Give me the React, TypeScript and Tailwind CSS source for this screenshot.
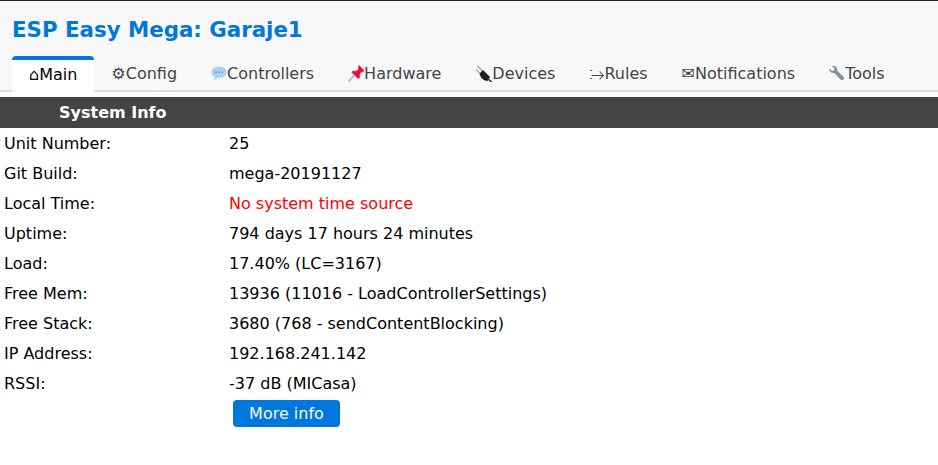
const TABS = [
  { label: "Config", glyph: "⚙" },
  { label: "Controllers", icon: "chat" },
  { label: "Hardware", icon: "pin" },
  { label: "Devices", icon: "plug" },
  { label: "Rules", glyph: "⧴" },
  { label: "Notifications", glyph: "✉" },
  { label: "Tools", icon: "wrench" },
];

const ROWS = [
  ["Unit Number:", "25"],
  ["Git Build:", "mega-20191127"],
  ["Local Time:", "No system time source"],
  ["Uptime:", "794 days 17 hours 24 minutes"],
  ["Load:", "17.40% (LC=3167)"],
  ["Free Mem:", "13936 (11016 - LoadControllerSettings)"],
  ["Free Stack:", "3680 (768 - sendContentBlocking)"],
  ["IP Address:", "192.168.241.142"],
  ["RSSI:", "-37 dB (MICasa)"],
];

function TabIcon({ name }: { name?: string }) {
  if (name === "chat") {
    return (
      <svg width="16" height="17" viewBox="0 0 16 17" className="shrink-0">
        <path d="M8 1.500C3.800 1.500.3 4 .3 7.200c0 2 1.400 3.700 3.500 4.700-.2 1.200-.8 2.200-1.700 3 1.900-.2 3.400-1 4.500-2.200.5.100 .9.100 1.400.1 4.300 0 7.700-2.500 7.700-5.600S12.300 1.500 8 1.500z" fill="#a9d3ee" />
        <circle cx="5" cy="7.200" r=".8" fill="#5b7f99" />
        <circle cx="8" cy="7.200" r=".8" fill="#5b7f99" />
        <circle cx="11" cy="7.200" r=".8" fill="#5b7f99" />
      </svg>
    );
  }
  if (name === "pin") {
    return (
      <svg width="16" height="17" viewBox="0 0 16 17" className="shrink-0">
        <path d="M.5 16.500l6-6.500" stroke="#a3acb3" strokeWidth="1.300" />
        <path d="M11 .5l5 5-1.500 1.500-1.500-.2-1.800 3.200.4 2.500-1.500 1-6-6 1-1.500 2.500.4 3.200-1.800-.2-1.500z" fill="#e0143c" stroke="#e0143c" strokeWidth=".8" strokeLinejoin="round" />
      </svg>
    );
  }
  if (name === "plug") {
    return (
      <svg width="17" height="17" viewBox="0 0 17 17" className="shrink-0">
        <path d="M2.500 1l5 5M1 4.500L5 8.500" stroke="#a3a8ad" strokeWidth="1.200" />
        <path d="M8 5l7 7-2.500 4c-3.500 0-7.500-3.500-8-7.500z" fill="#1c2024" />
        <path d="M13 14l3.500 3" stroke="#2c3e50" strokeWidth="1.600" />
      </svg>
    );
  }
  return (
    <svg width="17" height="17" viewBox="0 0 17 17" className="shrink-0">
      <path d="M1.500 3.500L4 6l2-.5.5-2L4 1c2-.8 4.200.2 5 2 .3.800.3 1.600.1 2.400l6.400 6.400c.8.800.8 2 0 2.800s-2 .8-2.800 0L6.300 7.900c-2.500.6-4.800-1-5.100-3.200-.1-.4 0-.8.300-1.200z" fill="#7d939f" />
    </svg>
  );
}

export default function App() {
  return (
    <div className="min-h-[465px] bg-white font-['DejaVu_Sans',sans-serif] text-base text-black">
      {/* header + tab strip */}
      <div className="border-t border-[#222] border-b-2 border-b-[#ddd] bg-[#f8f8f8]">
        <h1 className="pl-3 pt-[14px] text-[21.33px] font-bold leading-[30px] text-[#0077dd]">
          ESP Easy Mega: Garaje1
        </h1>
        <nav className="mt-[11px] flex pl-3">
          <a className="-mb-0.5 flex h-[36px] items-center rounded-t border-t-[4px] border-[#0077dd] bg-white px-[17px] pb-[3px] text-black">
            <span>⌂</span>
            <span>Main</span>
          </a>
          {TABS.map((tab) => (
            <a key={tab.label} className="mt-[1px] flex h-[33px] items-center px-[17px] text-[#444] last:-ml-[1px]">
              {tab.glyph ? <span>{tab.glyph}</span> : <TabIcon name={tab.icon} />}
              <span>{tab.label}</span>
            </a>
          ))}
        </nav>
      </div>

      <div className="mt-[5px] flex h-[31px] items-center bg-[#444] pl-[59px] font-bold text-white">
        System Info
      </div>

      <div className="flex flex-col pt-[1px]">
        {ROWS.map(([label, value]) => (
          <div key={label} className="flex h-[30px] items-center pl-1">
            <div className="w-[225px] shrink-0">{label}</div>
            <div className={label === "Local Time:" ? "text-[#ff0000]" : ""}>{value}</div>
          </div>
        ))}
      </div>

      <button className="ml-[233px] mt-[1px] flex h-[27px] w-[107px] items-center justify-center rounded-[4px] bg-[#0077dd] text-[#f4f8ff]">
        More info
      </button>
    </div>
  );
}
